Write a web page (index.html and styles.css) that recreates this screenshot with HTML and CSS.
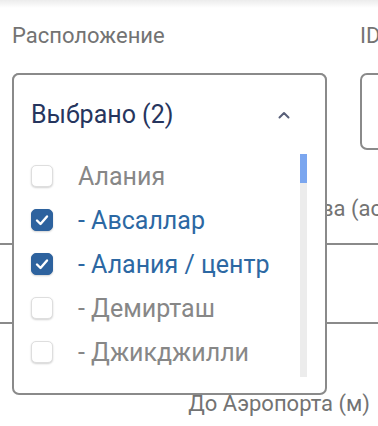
FILE: index.html
```html
<!DOCTYPE html>
<html lang="ru">
<head>
<meta charset="utf-8">
<link rel="stylesheet" href="styles.css">
</head>
<body>
<div class="shade"></div>
<div class="form">
  <div class="fields">
    <div class="field field-loc">
      <div class="label">Расположение</div>
      <div class="box"></div>
    </div>
    <div class="field field-id">
      <div class="label">ID</div>
      <div class="box"></div>
    </div>
  </div>
  <div class="row row-a"><span class="row-text">ва (ас</span></div>
  <div class="row row-b"></div>
  <div class="row row-c"><span class="row-text">До Аэропорта (м)</span></div>
</div>

<div class="dropdown">
  <div class="dd-head">
    <span class="dd-title">Выбрано (2)</span>
    <svg class="chev" width="12" height="8" viewBox="0 0 12 8"><path d="M1.5 6.5 L6 2 L10.5 6.5" fill="none" stroke="#596079" stroke-width="2" stroke-linecap="round" stroke-linejoin="round"/></svg>
  </div>
  <div class="dd-body">
    <div class="dd-list">
      <div class="opt"><span class="cb"></span><span class="opt-text">Алания</span></div>
      <div class="opt on"><span class="cb"><svg width="22" height="22" viewBox="0 0 22 22"><path d="M6 11.5 L9.5 15 L16 7.5" fill="none" stroke="#fff" stroke-width="2.4" stroke-linecap="round" stroke-linejoin="round"/></svg></span><span class="opt-text">- Авсаллар</span></div>
      <div class="opt on"><span class="cb"><svg width="22" height="22" viewBox="0 0 22 22"><path d="M6 11.5 L9.5 15 L16 7.5" fill="none" stroke="#fff" stroke-width="2.4" stroke-linecap="round" stroke-linejoin="round"/></svg></span><span class="opt-text">- Алания / центр</span></div>
      <div class="opt"><span class="cb"></span><span class="opt-text">- Демирташ</span></div>
      <div class="opt"><span class="cb"></span><span class="opt-text">- Джикджилли</span></div>
    </div>
    <div class="scroll"><div class="thumb"></div></div>
  </div>
</div>
</body>
</html>
```

FILE: styles.css
```css
html, body {
  margin: 0;
  padding: 0;
}
body {
  width: 378px;
  height: 426px;
  overflow: hidden;
  position: relative;
  background: #fff;
  font-family: Roboto, "Noto Sans", sans-serif;
}
.shade {
  position: absolute;
  left: 0;
  top: 0;
  width: 100%;
  height: 8px;
  background: linear-gradient(#ececec, rgba(255,255,255,0));
}
.form {
  padding-top: 24px;
}
.fields {
  display: flex;
  gap: 33px;
  padding-left: 12px;
  white-space: nowrap;
}
.field-loc {
  width: 315px;
  flex: none;
}
.field-id {
  width: 200px;
  flex: none;
}
.label {
  font-size: 22px;
  line-height: 24px;
  color: #737373;
  margin-bottom: 25px;
}
.box {
  box-sizing: border-box;
  height: 77px;
  border: 2px solid #8a8a8a;
  border-radius: 7px;
}
.row {
  box-sizing: border-box;
  white-space: nowrap;
}
.row-a {
  height: 95px;
  padding-top: 47px;
  padding-left: 321px;
  border-bottom: 2px solid #8a8a8a;
}
.row-b {
  height: 79px;
  border-bottom: 2px solid #8a8a8a;
}
.row-c {
  padding-top: 68px;
  text-align: right;
  padding-right: 8px;
}
.row-text {
  font-size: 22px;
  line-height: 24px;
  color: #737373;
}
.dropdown {
  position: absolute;
  left: 12px;
  top: 73px;
  width: 315px;
  height: 322px;
  box-sizing: border-box;
  border: 2px solid #8a8a8a;
  border-radius: 7px;
  background: #fff;
}
.dd-head {
  height: 78px;
  display: flex;
  align-items: center;
  padding-left: 17px;
  padding-right: 35px;
  justify-content: space-between;
}
.dd-title {
  font-size: 25px;
  color: #26355e;
  line-height: 28px;
  padding-top: 2px;
}
.chev {
  display: block;
  margin-top: 2px;
}
.dd-body {
  display: flex;
}
.dd-list {
  flex: 1;
  padding-left: 17px;
}
.opt {
  height: 44px;
  display: flex;
  align-items: center;
  gap: 25px;
}
.cb {
  width: 22px;
  height: 22px;
  box-sizing: border-box;
  border-radius: 5px;
  border: 1px solid #dedede;
  box-shadow: 0 1px 2px rgba(0,0,0,0.18);
  background: #fff;
  flex: none;
  position: relative;
  margin-top: 1px;
}
.cb svg {
  position: absolute;
  left: -1px;
  top: -1px;
}
.on .cb {
  background: #2d629e;
  border-color: #2d629e;
}
.opt-text {
  font-size: 25px;
  color: #878787;
  line-height: 28px;
  padding-top: 3px;
}
.on .opt-text {
  color: #2c68a3;
}
.scroll {
  width: 7px;
  height: 223px;
  margin-top: 1px;
  margin-right: 18px;
  background: #ececec;
  flex: none;
}
.thumb {
  height: 29px;
  background: #7ba6ef;
}
```
